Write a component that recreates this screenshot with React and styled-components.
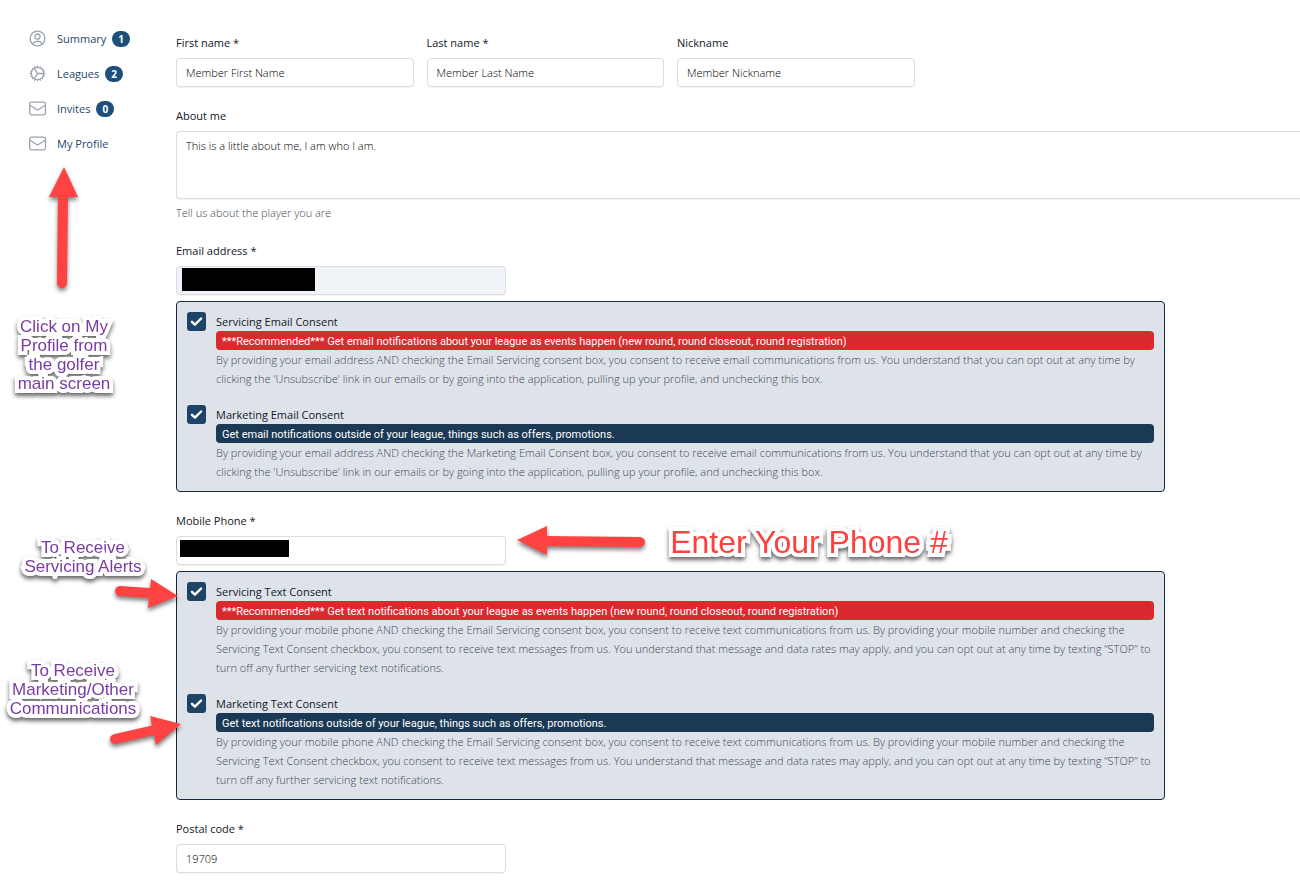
import React from "react";
import styled, { createGlobalStyle } from "styled-components";

const GlobalStyle = createGlobalStyle`
  * { box-sizing: border-box; }
  body {
    margin: 0;
    background: #fff;
    color: #111827;
    font: 11px/19px "Open Sans", "Noto Sans", sans-serif;
    overflow-x: hidden;
  }
`;

const Page = styled.div`
  position: relative;
  display: flex;
  align-items: flex-start;
  overflow: hidden;
`;

const Sidebar = styled.nav`
  display: flex;
  flex-direction: column;
  gap: 16px;
  flex: 0 0 176px;
  padding: 29px 0 0 28px;
`;

const NavLink = styled.a`
  display: flex;
  align-items: center;
  height: 19px;
  color: #1c466b;
  text-decoration: none;
`;

const NavIcon = styled.svg`
  flex: none;
  width: 19px;
  height: 19px;
  margin-right: 10px;
  fill: none;
  stroke: #9ca3af;
  stroke-width: 1.3;
  stroke-linecap: round;
  stroke-linejoin: round;
`;

const Badge = styled.span`
  margin-left: 6px;
  padding: 0 6px;
  border-radius: 8px;
  background: #1c4f7c;
  color: #fff;
  font-size: 10px;
  font-weight: 700;
  line-height: 16px;
`;

const Form = styled.form`
  display: flex;
  flex-direction: column;
  gap: 19px;
  flex: 1;
  min-width: 0;
  padding: 33px 0 8px;
`;

const Section = styled.div`
  margin-right: ${(p) => (p.$bleed ? 0 : "135px")};
`;

const Columns = styled.div`
  display: grid;
  grid-template-columns: repeat(${(p) => p.$count}, minmax(0, 1fr));
  column-gap: ${(p) => p.$gap || 0}px;
`;

const FieldBox = styled.div`
  position: relative;
  display: flex;
  flex-direction: column;
  gap: 6px;
`;

const Label = styled.label`
  display: block;
  color: #111827;
`;

const TextInput = styled.input`
  width: 100%;
  height: 29px;
  padding: 0 9px;
  border: 1px solid #d9dce3;
  border-radius: 4px;
  background: ${(p) => (p.readOnly ? "#f0f4f8" : "#fff")};
  box-shadow: 0 1px 1px rgba(0, 0, 0, 0.05);
  color: #000;
  font: inherit;
  font-weight: 300;
  outline: none;
`;

const TextArea = styled.textarea`
  display: block;
  width: 100%;
  height: 68px;
  padding: 4px 9px;
  border: 1px solid #d9dce3;
  border-right: 0;
  border-radius: 4px 0 0 4px;
  box-shadow: 0 1px 1px rgba(0, 0, 0, 0.05);
  color: #000;
  font: inherit;
  font-weight: 300;
  outline: none;
  resize: none;
`;

const Hint = styled.p`
  margin: 5px 0 0;
  color: #3f4756;
  font-weight: 300;
  line-height: 18px;
`;

const Redaction = styled.span`
  position: absolute;
  left: ${(p) => p.$left}px;
  bottom: ${(p) => p.$bottom}px;
  width: ${(p) => p.$width}px;
  height: ${(p) => p.$height}px;
  background: #000;
`;

const Card = styled.div`
  display: flex;
  flex-direction: column;
  gap: 17px;
  margin-top: 6px;
  padding: 10px;
  border: 1px solid #17293f;
  border-radius: 4px;
  background: #dee3ea;
`;

const ConsentRow = styled.div`
  display: flex;
  align-items: flex-start;
  gap: 10px;
`;

const CheckWrap = styled.span`
  position: relative;
  flex: none;
  width: 19px;
  height: 19px;
`;

const CheckInput = styled.input`
  appearance: none;
  display: block;
  width: 19px;
  height: 19px;
  margin: 0;
  border-radius: 3px;
  background: #1d4467;
`;

const CheckMark = styled.svg`
  position: absolute;
  inset: 0;
  width: 19px;
  height: 19px;
  fill: none;
  stroke: #fff;
  stroke-width: 2.4;
  stroke-linecap: round;
  stroke-linejoin: round;
  pointer-events: none;
`;

const ConsentBody = styled.div`
  flex: 1;
  min-width: 0;
`;

const Banner = styled.div`
  padding: 2px 6px 0;
  border-radius: 4px;
  background: ${(p) => (p.$urgent ? "#da2a2d" : "#1b3954")};
  color: #fff;
  font-family: Roboto, "Open Sans", sans-serif;
  line-height: 17px;
`;

const Terms = styled.p`
  margin: 0;
  color: #3f4756;
  font-weight: 300;
`;

const Note = styled.div`
  position: absolute;
  left: ${(p) => p.$x}px;
  top: ${(p) => p.$y}px;
  transform: translateX(-50%);
  color: ${(p) => (p.$large ? "#ff4040" : "#7a3ca3")};
  font-family: "Liberation Sans", Arial, sans-serif;
  font-size: ${(p) => (p.$large ? 32 : 17)}px;
  line-height: ${(p) => (p.$large ? 36 : 19)}px;
  text-align: center;
  white-space: pre;
  -webkit-text-stroke: 8px #fff;
  stroke-linejoin: round;
  paint-order: stroke fill;
  filter: drop-shadow(0 3px 2px rgba(0, 0, 0, 0.6));
  pointer-events: none;
`;

const Arrows = styled.svg`
  position: absolute;
  left: 0;
  top: 0;
  width: 660px;
  height: 760px;
  fill: #ff4343;
  stroke: #ff4343;
  filter: drop-shadow(0 3px 2px rgba(0, 0, 0, 0.5));
  pointer-events: none;
`;

const teeth = Array.from({ length: 16 }, (_, i) => i * 22.5);

const icons = {
  user: (
    <>
      <circle cx="9.5" cy="9.5" r="7.4" />
      <circle cx="9.5" cy="7.6" r="2.6" />
      <path d="M4.6 14.8a6 6 0 0 1 9.8 0" />
    </>
  ),
  cog: (
    <>
      <circle cx="9.5" cy="9.5" r="6.2" />
      {teeth.map((a) => (
        <path key={a} d="M9.5 3V2.2" transform={`rotate(${a} 9.5 9.5)`} />
      ))}
      <path d="M9.5 9.5H15.2M9.5 9.5L6.6 4.5M9.5 9.5L6.6 14.5" />
    </>
  ),
  mail: (
    <>
      <rect x="1.7" y="3.2" width="15.8" height="12.6" rx="1.8" />
      <path d="M1.9 6.2L9.6 11l7.7-4.8" />
    </>
  ),
};

const navItems = [
  { label: "Summary", icon: "user", count: 1 },
  { label: "Leagues", icon: "cog", count: 2 },
  { label: "Invites", icon: "mail", count: 0 },
  { label: "My Profile", icon: "mail" },
];

const emailTerms = (kind) =>
  `By providing your email address AND checking the ${kind} box, you consent to receive email communications from us. You understand that you can opt out at any time by clicking the 'Unsubscribe' link in our emails or by going into the application, pulling up your profile, and unchecking this box.`;

const textTerms =
  "By providing your mobile phone AND checking the Email Servicing consent box, you consent to receive text communications from us. By providing your mobile number and checking the Servicing Text Consent checkbox, you consent to receive text messages from us. You understand that message and data rates may apply, and you can opt out at any time by texting “STOP” to turn off any further servicing text notifications.";

function Field({ id, label, children, ...input }) {
  return (
    <FieldBox>
      <Label htmlFor={id}>{label}</Label>
      <TextInput id={id} type="text" {...input} />
      {children}
    </FieldBox>
  );
}

function Consent({ id, title, banner, urgent, terms }) {
  return (
    <ConsentRow>
      <CheckWrap>
        <CheckInput id={id} type="checkbox" defaultChecked />
        <CheckMark viewBox="0 0 19 19" aria-hidden="true">
          <path d="M5 9.8l2.9 2.9 6.2-6.2" />
        </CheckMark>
      </CheckWrap>
      <ConsentBody>
        <Label htmlFor={id}>{title}</Label>
        <Banner $urgent={urgent}>{banner}</Banner>
        <Terms>{terms}</Terms>
      </ConsentBody>
    </ConsentRow>
  );
}

export default function App() {
  return (
    <>
      <GlobalStyle />
      <Page>
        <Sidebar>
          {navItems.map((item) => (
            <NavLink href="#" key={item.label}>
              <NavIcon viewBox="0 0 19 19" aria-hidden="true">
                {icons[item.icon]}
              </NavIcon>
              {item.label}
              {item.count !== undefined && <Badge>{item.count}</Badge>}
            </NavLink>
          ))}
        </Sidebar>

        <Form>
          <Section>
            <Columns $count={4} $gap={13}>
              <Field id="first" label="First name *" defaultValue="Member First Name" />
              <Field id="last" label="Last name *" defaultValue="Member Last Name" />
              <Field id="nick" label="Nickname" defaultValue="Member Nickname" />
            </Columns>
          </Section>

          <Section $bleed>
            <FieldBox>
              <Label htmlFor="about">About me</Label>
              <TextArea id="about" defaultValue="This is a little about me, I am who I am." />
            </FieldBox>
            <Hint>Tell us about the player you are</Hint>
          </Section>

          <Section>
            <Columns $count={3}>
              <Field id="email" label="Email address *" readOnly>
                <Redaction $left={6} $bottom={4} $width={133} $height={23} />
              </Field>
            </Columns>
            <Card>
              <Consent
                id="service-email"
                title="Servicing Email Consent"
                urgent
                banner="***Recommended*** Get email notifications about your league as events happen (new round, round closeout, round registration)"
                terms={emailTerms("Email Servicing consent")}
              />
              <Consent
                id="marketing-email"
                title="Marketing Email Consent"
                banner="Get email notifications outside of your league, things such as offers, promotions."
                terms={emailTerms("Marketing Email Consent")}
              />
            </Card>
          </Section>

          <Section>
            <Columns $count={3}>
              <Field id="phone" label="Mobile Phone *">
                <Redaction $left={4} $bottom={8} $width={109} $height={17} />
              </Field>
            </Columns>
            <Card>
              <Consent
                id="service-text"
                title="Servicing Text Consent"
                urgent
                banner="***Recommended*** Get text notifications about your league as events happen (new round, round closeout, round registration)"
                terms={textTerms}
              />
              <Consent
                id="marketing-text"
                title="Marketing Text Consent"
                banner="Get text notifications outside of your league, things such as offers, promotions."
                terms={textTerms}
              />
            </Card>
          </Section>

          <Section>
            <Columns $count={3}>
              <Field id="postal" label="Postal code *" defaultValue="19709" />
            </Columns>
          </Section>
        </Form>

        <Arrows viewBox="0 0 660 760" aria-hidden="true">
          <g strokeWidth="10" strokeLinecap="round">
            <path d="M63 195L62 283" />
            <path d="M545 541L640 542" />
            <path d="M120 591L150 593" />
            <path d="M115 739L154 730" />
          </g>
          <g stroke="none">
            <path d="M64 167L78 197H49Z" />
            <path d="M517 540L547 526V555Z" />
            <path d="M178 596L151 579L148 608Z" />
            <path d="M181 724L150 716L156 745Z" />
          </g>
        </Arrows>

        <Note $x={64} $y={317}>{"Click on My\nProfile from\nthe golfer\nmain screen"}</Note>
        <Note $x={83} $y={538}>{"To Receive\nServicing Alerts"}</Note>
        <Note $x={73} $y={661}>{"To Receive\nMarketing/Other\nCommunications"}</Note>
        <Note $x={809} $y={524} $large>Enter Your Phone #</Note>
      </Page>
    </>
  );
}
